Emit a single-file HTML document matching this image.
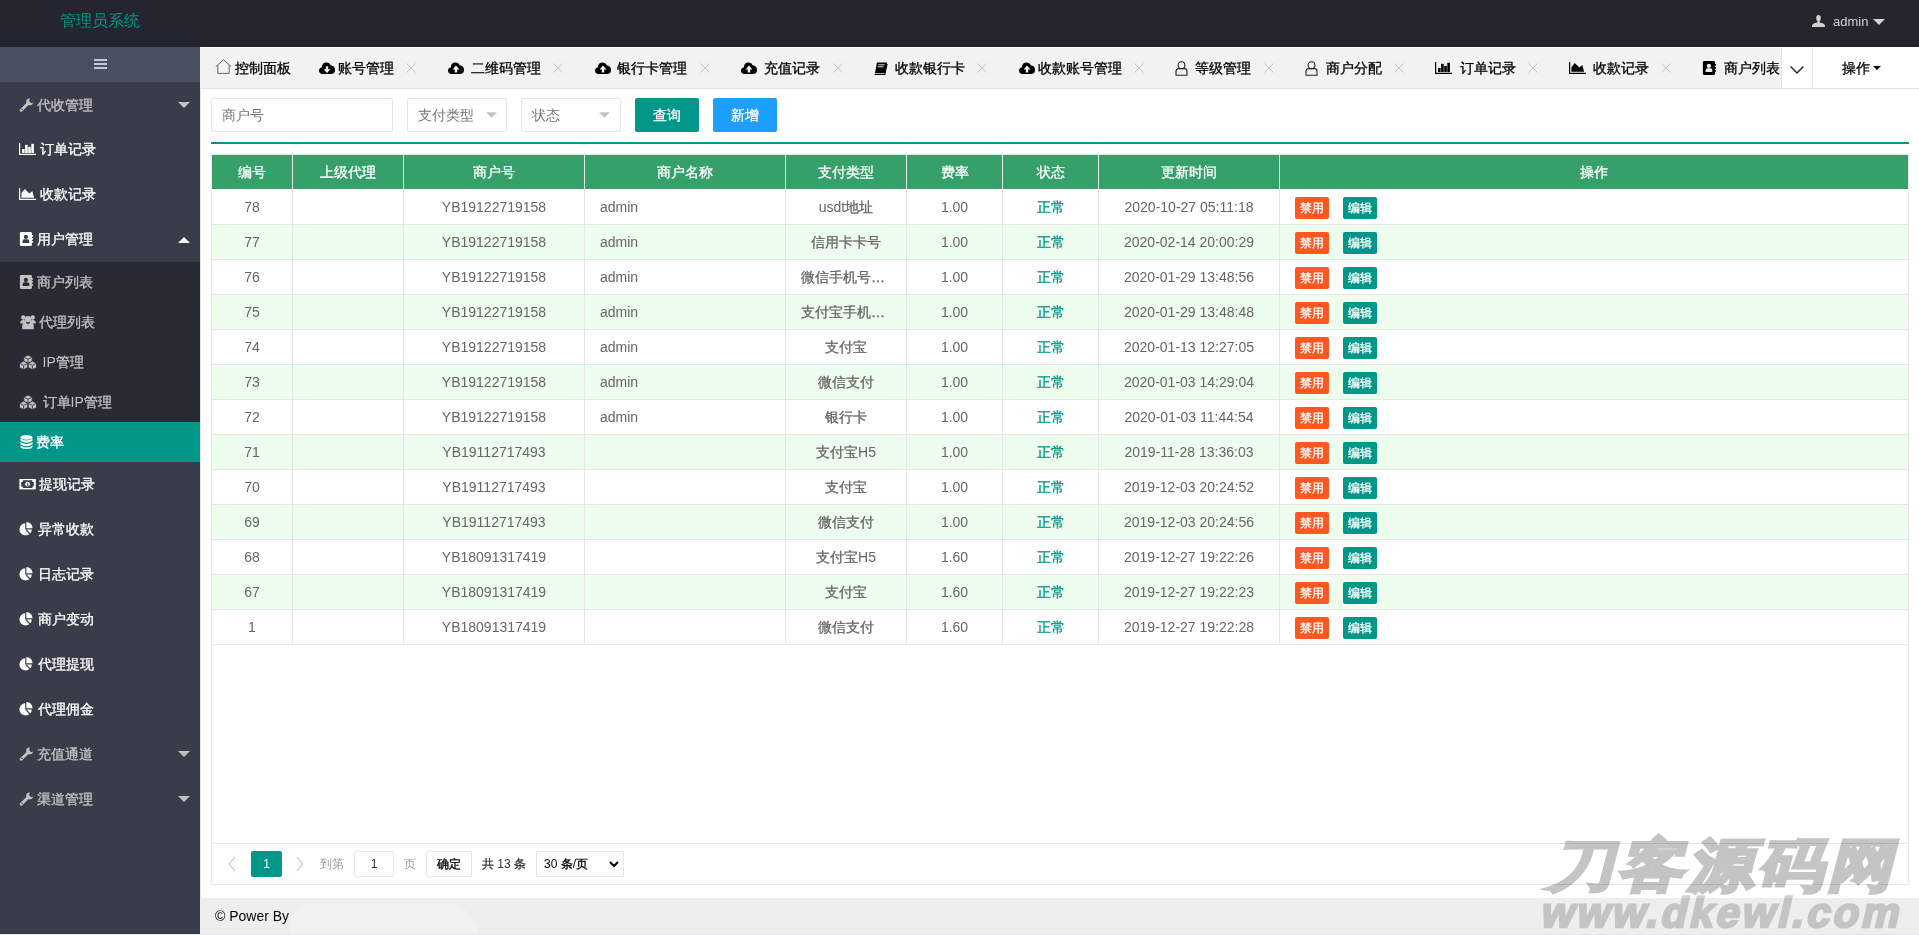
<!DOCTYPE html><html><head><meta charset="utf-8"><style>
*{margin:0;padding:0;box-sizing:border-box}
html,body{width:1919px;height:935px;overflow:hidden;background:#fff;font-family:"Liberation Sans",sans-serif;font-size:14px;color:#333}
.a{position:absolute}
svg{display:block}
.cj{-webkit-text-stroke-width:0.3px}
.ns .cj{-webkit-text-stroke-width:0}
.nv{position:absolute;left:0;width:200px;height:45px}
.nv .ic{position:absolute;left:19px}
.nv .tx{position:absolute;white-space:nowrap;line-height:20px;font-size:14px}
.tab{position:absolute;top:58px;line-height:20px;white-space:nowrap;color:#000}
.th{position:absolute;top:155px;height:34px;line-height:34px;text-align:center;color:#fff;font-size:14px}
.td{position:absolute;height:35px;line-height:37px;color:#666;white-space:nowrap;font-size:14px}
.btn{position:absolute;width:34px;height:22px;border-radius:2px;color:#fff;font-size:12px;line-height:22px;text-align:center}
</style></head><body>

<div class="a" style="left:0;top:0;width:1919px;height:47px;background:#23262E"></div>
<div class="a ns" style="left:0;top:11px;width:200px;text-align:center;line-height:20px;font-size:16px;color:#009688"><span class="cj">管理员系统</span></div>
<div class="a" style="left:1812px;top:15px"><svg width="13" height="12" viewBox="0 0 13 12"><path d="M4.2 3 Q4.2 0 6.5 0 Q8.8 0 8.8 3 Q8.8 5.6 7.6 6.6 V7.6 Q13 8.6 13 11 V12 H0 V11 Q0 8.6 5.4 7.6 V6.6 Q4.2 5.6 4.2 3 Z" fill="#d2d2d2"/></svg></div>
<div class="a" style="left:1833px;top:11.5px;line-height:20px;font-size:13px;color:#d2d2d2">admin</div>
<div class="a" style="left:1873px;top:19px"><svg width="12" height="6" viewBox="0 0 12 6"><path d="M0 0 H12 L6 6 Z" fill="#d2d2d2"/></svg></div>
<div class="a" style="left:0;top:47px;width:200px;height:888px;background:#393D49"></div>
<div class="a" style="left:0;top:47px;width:200px;height:35px;background:#4A4F61"></div>
<div class="a" style="left:93.5px;top:59px"><svg width="13" height="10" viewBox="0 0 13 10"><rect x="0" y="0" width="13" height="2" fill="#c6ccd4"/><rect x="0" y="4" width="13" height="2" fill="#c6ccd4"/><rect x="0" y="8" width="13" height="2" fill="#c6ccd4"/></svg></div>
<div class="a" style="left:0;top:262px;width:200px;height:200px;background:#282B33"></div>
<div class="a" style="left:0;top:422px;width:200px;height:40px;background:#009688"></div>
<div class="a" style="left:19px;top:97.5px"><svg width="15" height="14" viewBox="0 0 15 14"><path d="M2.2 12.2 L8.2 6.2" stroke="#c2c2c2" stroke-width="3" stroke-linecap="round"/><circle cx="10.6" cy="3.9" r="3.4" fill="#c2c2c2"/><path d="M11.3 -0.5 L15.5 3.7 L12.2 5.2 L10.0 2.9 Z" fill="#393D49"/><circle cx="3" cy="11.4" r="0.7" fill="#393D49"/></svg></div>
<div class="a" style="left:37px;top:94.5px;line-height:20px;color:#c2c2c2;white-space:nowrap"><span class="cj">代收管理</span></div>
<div class="a" style="left:178px;top:101.5px"><svg width="12" height="6" viewBox="0 0 12 6"><path d="M0 0 H12 L6 6 Z" fill="#c2c2c2"/></svg></div>
<div class="a" style="left:19px;top:143.0px"><svg width="17" height="12" viewBox="0 0 17 12"><path d="M0.6 0 V11.4 H17" stroke="#ffffff" stroke-width="1.2" fill="none"/><rect x="3.1" y="6" width="2.5" height="4" fill="#ffffff"/><rect x="6.1" y="1.8" width="2.6" height="8.2" fill="#ffffff"/><rect x="9.2" y="3.8" width="2.6" height="6.2" fill="#ffffff"/><rect x="12.3" y="0.8" width="2.6" height="9.2" fill="#ffffff"/></svg></div>
<div class="a" style="left:40px;top:139.0px;line-height:20px;color:#ffffff;white-space:nowrap"><span class="cj">订单记录</span></div>
<div class="a" style="left:19px;top:188.0px"><svg width="17" height="12" viewBox="0 0 17 12"><path d="M0.6 0 V11.4 H17" stroke="#ffffff" stroke-width="1.2" fill="none"/><path d="M2.4 9.8 V5.2 L5.8 0.9 L10.4 5.4 L13.3 3 L15.1 9.8 Z" fill="#ffffff"/></svg></div>
<div class="a" style="left:40px;top:184.0px;line-height:20px;color:#ffffff;white-space:nowrap"><span class="cj">收款记录</span></div>
<div class="a" style="left:19px;top:232.0px"><svg width="15" height="14" viewBox="0 0 15 14"><rect x="0.9" y="0" width="12" height="14" rx="1.2" fill="#ffffff"/><rect x="12" y="3.1" width="2.2" height="1.7" rx="0.8" fill="#ffffff"/><rect x="12" y="6.1" width="2.2" height="1.7" rx="0.8" fill="#ffffff"/><rect x="12" y="9.1" width="2.2" height="1.7" rx="0.8" fill="#ffffff"/><circle cx="6.9" cy="4.9" r="2.1" fill="#393D49"/><path d="M3.6 10.9 V9.4 Q3.6 7.3 5.4 7.3 H8.4 Q10.3 7.3 10.3 9.4 V10.9 Z" fill="#393D49"/></svg></div>
<div class="a" style="left:37px;top:229.0px;line-height:20px;color:#ffffff;white-space:nowrap"><span class="cj">用户管理</span></div>
<div class="a" style="left:178px;top:237.0px"><svg width="12" height="6" viewBox="0 0 12 6"><path d="M0 6 H12 L6 0 Z" fill="#ffffff"/></svg></div>
<div class="a" style="left:19px;top:275.0px"><svg width="15" height="14" viewBox="0 0 15 14"><rect x="0.9" y="0" width="12" height="14" rx="1.2" fill="#c2c2c2"/><rect x="12" y="3.1" width="2.2" height="1.7" rx="0.8" fill="#c2c2c2"/><rect x="12" y="6.1" width="2.2" height="1.7" rx="0.8" fill="#c2c2c2"/><rect x="12" y="9.1" width="2.2" height="1.7" rx="0.8" fill="#c2c2c2"/><circle cx="6.9" cy="4.9" r="2.1" fill="#282B33"/><path d="M3.6 10.9 V9.4 Q3.6 7.3 5.4 7.3 H8.4 Q10.3 7.3 10.3 9.4 V10.9 Z" fill="#282B33"/></svg></div>
<div class="a" style="left:37px;top:272.0px;line-height:20px;color:#c2c2c2;white-space:nowrap"><span class="cj">商户列表</span></div>
<div class="a" style="left:20px;top:314.5px"><svg width="16" height="15" viewBox="0 0 16 15"><circle cx="3.3" cy="2.5" r="2.2" fill="#c2c2c2"/><circle cx="12.7" cy="2.5" r="2.2" fill="#c2c2c2"/><path d="M0.1 8.6 Q0.1 5 3.3 5 Q5 5 6 6 V8.6 Z" fill="#c2c2c2"/><path d="M15.9 8.6 Q15.9 5 12.7 5 Q11 5 10 6 V8.6 Z" fill="#c2c2c2"/><circle cx="8" cy="4.2" r="3.1" fill="#c2c2c2"/><path d="M2.2 14.2 V11.4 Q2.2 7.8 5.2 7.8 L8 9 L10.8 7.8 Q13.8 7.8 13.8 11.4 V14.2 Z" fill="#c2c2c2"/></svg></div>
<div class="a" style="left:39px;top:312.0px;line-height:20px;color:#c2c2c2;white-space:nowrap"><span class="cj">代理列表</span></div>
<div class="a" style="left:19px;top:354.5px"><svg width="18" height="15" viewBox="0 0 18 15"><path d="M4.8 2.1 L9.0 0 L13.2 2.1 V6.5 L9.0 8.6 L4.8 6.5 Z" fill="#c2c2c2" stroke="#282B33" stroke-width="0.9"/><path d="M5.3999999999999995 2.4 L9.0 4.2 L12.6 2.4 M9.0 4.2 V8.2" fill="none" stroke="#282B33" stroke-width="0.8"/><path d="M0.4 8.2 L4.6000000000000005 6.1 L8.8 8.2 V12.6 L4.6000000000000005 14.7 L0.4 12.6 Z" fill="#c2c2c2" stroke="#282B33" stroke-width="0.9"/><path d="M1.0 8.5 L4.6000000000000005 10.3 L8.2 8.5 M4.6000000000000005 10.3 V14.299999999999999" fill="none" stroke="#282B33" stroke-width="0.8"/><path d="M9.2 8.2 L13.399999999999999 6.1 L17.6 8.2 V12.6 L13.399999999999999 14.7 L9.2 12.6 Z" fill="#c2c2c2" stroke="#282B33" stroke-width="0.9"/><path d="M9.799999999999999 8.5 L13.399999999999999 10.3 L17.0 8.5 M13.399999999999999 10.3 V14.299999999999999" fill="none" stroke="#282B33" stroke-width="0.8"/></svg></div>
<div class="a" style="left:42.5px;top:352.0px;line-height:20px;color:#c2c2c2;white-space:nowrap">IP<span class="cj">管理</span></div>
<div class="a" style="left:19px;top:394.5px"><svg width="18" height="15" viewBox="0 0 18 15"><path d="M4.8 2.1 L9.0 0 L13.2 2.1 V6.5 L9.0 8.6 L4.8 6.5 Z" fill="#c2c2c2" stroke="#282B33" stroke-width="0.9"/><path d="M5.3999999999999995 2.4 L9.0 4.2 L12.6 2.4 M9.0 4.2 V8.2" fill="none" stroke="#282B33" stroke-width="0.8"/><path d="M0.4 8.2 L4.6000000000000005 6.1 L8.8 8.2 V12.6 L4.6000000000000005 14.7 L0.4 12.6 Z" fill="#c2c2c2" stroke="#282B33" stroke-width="0.9"/><path d="M1.0 8.5 L4.6000000000000005 10.3 L8.2 8.5 M4.6000000000000005 10.3 V14.299999999999999" fill="none" stroke="#282B33" stroke-width="0.8"/><path d="M9.2 8.2 L13.399999999999999 6.1 L17.6 8.2 V12.6 L13.399999999999999 14.7 L9.2 12.6 Z" fill="#c2c2c2" stroke="#282B33" stroke-width="0.9"/><path d="M9.799999999999999 8.5 L13.399999999999999 10.3 L17.0 8.5 M13.399999999999999 10.3 V14.299999999999999" fill="none" stroke="#282B33" stroke-width="0.8"/></svg></div>
<div class="a" style="left:42.5px;top:392.0px;line-height:20px;color:#c2c2c2;white-space:nowrap"><span class="cj">订单</span>IP<span class="cj">管理</span></div>
<div class="a" style="left:20px;top:435.0px"><svg width="13" height="14" viewBox="0 0 13 14"><ellipse cx="6.5" cy="2.4" rx="6" ry="2.4" fill="#ffffff"/><path d="M0.5 3.6 Q6.5 7.5 12.5 3.6 V5.8 Q6.5 9.6 0.5 5.8 Z" fill="#ffffff"/><path d="M0.5 7.1 Q6.5 11 12.5 7.1 V9.3 Q6.5 13.1 0.5 9.3 Z" fill="#ffffff"/><path d="M0.5 10.6 Q6.5 14.5 12.5 10.6 V11.5 Q12.5 14 6.5 14 Q0.5 14 0.5 11.5 Z" fill="#ffffff"/></svg></div>
<div class="a" style="left:36px;top:432.0px;line-height:20px;color:#ffffff;white-space:nowrap"><span class="cj">费率</span></div>
<div class="a" style="left:19px;top:478.5px"><svg width="17" height="11" viewBox="0 0 17 11"><rect x="0.4" y="0" width="16.4" height="10.4" fill="#ffffff"/><path d="M4 1.3 H13.2 L13.6 2.9 H14.8 V7.5 H13.6 L13.2 9.1 H4 L3.6 7.5 H2.2 V2.9 H3.6 Z" fill="#393D49"/><circle cx="8.6" cy="5.2" r="2.4" fill="#ffffff"/><path d="M8.8 3.8 V6.6 M8 6.6 H9.6" stroke="#393D49" stroke-width="0.9"/></svg></div>
<div class="a" style="left:39px;top:474.0px;line-height:20px;color:#ffffff;white-space:nowrap"><span class="cj">提现记录</span></div>
<div class="a" style="left:19px;top:522.0px"><svg width="14" height="14" viewBox="0 0 14 14"><path d="M6.2 1.2 A6.2 6.2 0 1 0 12.8 7.6 H6.2 Z" fill="#ffffff"/><path d="M7.4 0 A6.4 6.4 0 0 1 13.6 6.2 H7.4 Z" fill="#ffffff"/><path d="M7 7.6 L11 12" stroke="#393D49" stroke-width="1.2"/></svg></div>
<div class="a" style="left:38px;top:519.0px;line-height:20px;color:#ffffff;white-space:nowrap"><span class="cj">异常收款</span></div>
<div class="a" style="left:19px;top:567.0px"><svg width="14" height="14" viewBox="0 0 14 14"><path d="M6.2 1.2 A6.2 6.2 0 1 0 12.8 7.6 H6.2 Z" fill="#ffffff"/><path d="M7.4 0 A6.4 6.4 0 0 1 13.6 6.2 H7.4 Z" fill="#ffffff"/><path d="M7 7.6 L11 12" stroke="#393D49" stroke-width="1.2"/></svg></div>
<div class="a" style="left:38px;top:564.0px;line-height:20px;color:#ffffff;white-space:nowrap"><span class="cj">日志记录</span></div>
<div class="a" style="left:19px;top:612.0px"><svg width="14" height="14" viewBox="0 0 14 14"><path d="M6.2 1.2 A6.2 6.2 0 1 0 12.8 7.6 H6.2 Z" fill="#ffffff"/><path d="M7.4 0 A6.4 6.4 0 0 1 13.6 6.2 H7.4 Z" fill="#ffffff"/><path d="M7 7.6 L11 12" stroke="#393D49" stroke-width="1.2"/></svg></div>
<div class="a" style="left:38px;top:609.0px;line-height:20px;color:#ffffff;white-space:nowrap"><span class="cj">商户变动</span></div>
<div class="a" style="left:19px;top:657.0px"><svg width="14" height="14" viewBox="0 0 14 14"><path d="M6.2 1.2 A6.2 6.2 0 1 0 12.8 7.6 H6.2 Z" fill="#ffffff"/><path d="M7.4 0 A6.4 6.4 0 0 1 13.6 6.2 H7.4 Z" fill="#ffffff"/><path d="M7 7.6 L11 12" stroke="#393D49" stroke-width="1.2"/></svg></div>
<div class="a" style="left:38px;top:654.0px;line-height:20px;color:#ffffff;white-space:nowrap"><span class="cj">代理提现</span></div>
<div class="a" style="left:19px;top:702.0px"><svg width="14" height="14" viewBox="0 0 14 14"><path d="M6.2 1.2 A6.2 6.2 0 1 0 12.8 7.6 H6.2 Z" fill="#ffffff"/><path d="M7.4 0 A6.4 6.4 0 0 1 13.6 6.2 H7.4 Z" fill="#ffffff"/><path d="M7 7.6 L11 12" stroke="#393D49" stroke-width="1.2"/></svg></div>
<div class="a" style="left:38px;top:699.0px;line-height:20px;color:#ffffff;white-space:nowrap"><span class="cj">代理佣金</span></div>
<div class="a" style="left:19px;top:747.0px"><svg width="15" height="14" viewBox="0 0 15 14"><path d="M2.2 12.2 L8.2 6.2" stroke="#c2c2c2" stroke-width="3" stroke-linecap="round"/><circle cx="10.6" cy="3.9" r="3.4" fill="#c2c2c2"/><path d="M11.3 -0.5 L15.5 3.7 L12.2 5.2 L10.0 2.9 Z" fill="#393D49"/><circle cx="3" cy="11.4" r="0.7" fill="#393D49"/></svg></div>
<div class="a" style="left:37px;top:744.0px;line-height:20px;color:#c2c2c2;white-space:nowrap"><span class="cj">充值通道</span></div>
<div class="a" style="left:178px;top:751.0px"><svg width="12" height="6" viewBox="0 0 12 6"><path d="M0 0 H12 L6 6 Z" fill="#c2c2c2"/></svg></div>
<div class="a" style="left:19px;top:792.0px"><svg width="15" height="14" viewBox="0 0 15 14"><path d="M2.2 12.2 L8.2 6.2" stroke="#c2c2c2" stroke-width="3" stroke-linecap="round"/><circle cx="10.6" cy="3.9" r="3.4" fill="#c2c2c2"/><path d="M11.3 -0.5 L15.5 3.7 L12.2 5.2 L10.0 2.9 Z" fill="#393D49"/><circle cx="3" cy="11.4" r="0.7" fill="#393D49"/></svg></div>
<div class="a" style="left:37px;top:789.0px;line-height:20px;color:#c2c2c2;white-space:nowrap"><span class="cj">渠道管理</span></div>
<div class="a" style="left:178px;top:796.0px"><svg width="12" height="6" viewBox="0 0 12 6"><path d="M0 0 H12 L6 6 Z" fill="#c2c2c2"/></svg></div>
<div class="a" style="left:200px;top:47px;width:1px;height:851px;background:#e6e6e6"></div>
<div class="a" style="left:200px;top:47px;width:1719px;height:42px;background:#f2f2f2;border-top:1px solid #fff;border-bottom:1px solid #e2e2e2"></div>
<div class="a" style="left:215px;top:59px"><svg width="17" height="15" viewBox="0 0 17 15"><path d="M0.8 7.6 L8.5 0.8 L16.2 7.6" stroke="#555" stroke-width="0.9" fill="none"/><path d="M2.8 6.2 V14.4 H14.2 V6.2" stroke="#555" stroke-width="0.9" fill="none"/></svg></div>
<div class="tab" style="left:235px"><span class="cj">控制面板</span></div>
<div class="a" style="left:319px;top:62px"><svg width="16" height="12" viewBox="0 0 16 12"><path d="M3.6 12 Q0 12 0 8.6 Q0 5.8 2.8 5.4 Q3 0.4 7.6 0.4 Q10.6 0.4 11.6 3.2 Q16 3.6 16 8 Q16 12 12 12 Z" fill="#000"/><path d="M8 11 L4.6 7.2 H6.8 V4.2 H9.2 V7.2 H11.4 Z" fill="#f2f2f2"/></svg></div>
<div class="tab" style="left:337.5px"><span class="cj">账号管理</span></div>
<div class="a" style="left:406px;top:63px"><svg width="10" height="10" viewBox="0 0 10 10"><path d="M0.5 0.5 L9.5 9.5 M9.5 0.5 L0.5 9.5" stroke="#c2c2c2" stroke-width="1"/></svg></div>
<div class="a" style="left:448px;top:62px"><svg width="16" height="12" viewBox="0 0 16 12"><path d="M3.6 12 Q0 12 0 8.6 Q0 5.8 2.8 5.4 Q3 0.4 7.6 0.4 Q10.6 0.4 11.6 3.2 Q16 3.6 16 8 Q16 12 12 12 Z" fill="#000"/><path d="M8 3.6 L4.6 7.4 H6.8 V10.4 H9.2 V7.4 H11.4 Z" fill="#f2f2f2"/></svg></div>
<div class="tab" style="left:470.5px"><span class="cj">二维码管理</span></div>
<div class="a" style="left:553px;top:63px"><svg width="10" height="10" viewBox="0 0 10 10"><path d="M0.5 0.5 L9.5 9.5 M9.5 0.5 L0.5 9.5" stroke="#c2c2c2" stroke-width="1"/></svg></div>
<div class="a" style="left:594.5px;top:62px"><svg width="16" height="12" viewBox="0 0 16 12"><path d="M3.6 12 Q0 12 0 8.6 Q0 5.8 2.8 5.4 Q3 0.4 7.6 0.4 Q10.6 0.4 11.6 3.2 Q16 3.6 16 8 Q16 12 12 12 Z" fill="#000"/><path d="M8 3.6 L4.6 7.4 H6.8 V10.4 H9.2 V7.4 H11.4 Z" fill="#f2f2f2"/></svg></div>
<div class="tab" style="left:616.5px"><span class="cj">银行卡管理</span></div>
<div class="a" style="left:699.5px;top:63px"><svg width="10" height="10" viewBox="0 0 10 10"><path d="M0.5 0.5 L9.5 9.5 M9.5 0.5 L0.5 9.5" stroke="#c2c2c2" stroke-width="1"/></svg></div>
<div class="a" style="left:741px;top:62px"><svg width="16" height="12" viewBox="0 0 16 12"><path d="M3.6 12 Q0 12 0 8.6 Q0 5.8 2.8 5.4 Q3 0.4 7.6 0.4 Q10.6 0.4 11.6 3.2 Q16 3.6 16 8 Q16 12 12 12 Z" fill="#000"/><path d="M8 3.6 L4.6 7.4 H6.8 V10.4 H9.2 V7.4 H11.4 Z" fill="#f2f2f2"/></svg></div>
<div class="tab" style="left:764px"><span class="cj">充值记录</span></div>
<div class="a" style="left:833px;top:63px"><svg width="10" height="10" viewBox="0 0 10 10"><path d="M0.5 0.5 L9.5 9.5 M9.5 0.5 L0.5 9.5" stroke="#c2c2c2" stroke-width="1"/></svg></div>
<div class="a" style="left:874px;top:62px"><svg width="14" height="13" viewBox="0 0 14 13"><path d="M3 0.6 H13.2 L10.8 11 H1 Z" fill="#000"/><path d="M0.6 12.4 H10.8 L13.2 2" stroke="#000" stroke-width="1.1" fill="none"/><path d="M4.2 2.8 H10.6 M3.6 4.8 H9.6" stroke="#f2f2f2" stroke-width="0.9"/></svg></div>
<div class="tab" style="left:895px"><span class="cj">收款银行卡</span></div>
<div class="a" style="left:977px;top:63px"><svg width="10" height="10" viewBox="0 0 10 10"><path d="M0.5 0.5 L9.5 9.5 M9.5 0.5 L0.5 9.5" stroke="#c2c2c2" stroke-width="1"/></svg></div>
<div class="a" style="left:1019px;top:62px"><svg width="16" height="12" viewBox="0 0 16 12"><path d="M3.6 12 Q0 12 0 8.6 Q0 5.8 2.8 5.4 Q3 0.4 7.6 0.4 Q10.6 0.4 11.6 3.2 Q16 3.6 16 8 Q16 12 12 12 Z" fill="#000"/><path d="M8 3.6 L4.6 7.4 H6.8 V10.4 H9.2 V7.4 H11.4 Z" fill="#f2f2f2"/></svg></div>
<div class="tab" style="left:1038px"><span class="cj">收款账号管理</span></div>
<div class="a" style="left:1134px;top:63px"><svg width="10" height="10" viewBox="0 0 10 10"><path d="M0.5 0.5 L9.5 9.5 M9.5 0.5 L0.5 9.5" stroke="#c2c2c2" stroke-width="1"/></svg></div>
<div class="a" style="left:1175px;top:60.5px"><svg width="13" height="15" viewBox="0 0 13 15"><circle cx="6.5" cy="4.2" r="3.4" stroke="#222" stroke-width="1.1" fill="none"/><path d="M1 14.2 V10.4 Q1 7.6 3.6 7.6 H9.4 Q12 7.6 12 10.4 V14.2 Z" stroke="#222" stroke-width="1.1" fill="none"/></svg></div>
<div class="tab" style="left:1195px"><span class="cj">等级管理</span></div>
<div class="a" style="left:1264px;top:63px"><svg width="10" height="10" viewBox="0 0 10 10"><path d="M0.5 0.5 L9.5 9.5 M9.5 0.5 L0.5 9.5" stroke="#c2c2c2" stroke-width="1"/></svg></div>
<div class="a" style="left:1305px;top:60.5px"><svg width="13" height="15" viewBox="0 0 13 15"><circle cx="6.5" cy="4.2" r="3.4" stroke="#222" stroke-width="1.1" fill="none"/><path d="M1 14.2 V10.4 Q1 7.6 3.6 7.6 H9.4 Q12 7.6 12 10.4 V14.2 Z" stroke="#222" stroke-width="1.1" fill="none"/></svg></div>
<div class="tab" style="left:1325.5px"><span class="cj">商户分配</span></div>
<div class="a" style="left:1394px;top:63px"><svg width="10" height="10" viewBox="0 0 10 10"><path d="M0.5 0.5 L9.5 9.5 M9.5 0.5 L0.5 9.5" stroke="#c2c2c2" stroke-width="1"/></svg></div>
<div class="a" style="left:1435px;top:62px"><svg width="17" height="12" viewBox="0 0 17 12"><path d="M0.6 0 V11.4 H17" stroke="#000" stroke-width="1.2" fill="none"/><rect x="3.1" y="6" width="2.5" height="4" fill="#000"/><rect x="6.1" y="1.8" width="2.6" height="8.2" fill="#000"/><rect x="9.2" y="3.8" width="2.6" height="6.2" fill="#000"/><rect x="12.3" y="0.8" width="2.6" height="9.2" fill="#000"/></svg></div>
<div class="tab" style="left:1460px"><span class="cj">订单记录</span></div>
<div class="a" style="left:1528px;top:63px"><svg width="10" height="10" viewBox="0 0 10 10"><path d="M0.5 0.5 L9.5 9.5 M9.5 0.5 L0.5 9.5" stroke="#c2c2c2" stroke-width="1"/></svg></div>
<div class="a" style="left:1569px;top:62px"><svg width="17" height="12" viewBox="0 0 17 12"><path d="M0.6 0 V11.4 H17" stroke="#000" stroke-width="1.2" fill="none"/><path d="M2.4 9.8 V5.2 L5.8 0.9 L10.4 5.4 L13.3 3 L15.1 9.8 Z" fill="#000"/></svg></div>
<div class="tab" style="left:1593px"><span class="cj">收款记录</span></div>
<div class="a" style="left:1661px;top:63px"><svg width="10" height="10" viewBox="0 0 10 10"><path d="M0.5 0.5 L9.5 9.5 M9.5 0.5 L0.5 9.5" stroke="#c2c2c2" stroke-width="1"/></svg></div>
<div class="a" style="left:1702px;top:61px"><svg width="15" height="14" viewBox="0 0 15 14"><rect x="0.9" y="0" width="12" height="14" rx="1.2" fill="#000"/><rect x="12" y="3.1" width="2.2" height="1.7" rx="0.8" fill="#000"/><rect x="12" y="6.1" width="2.2" height="1.7" rx="0.8" fill="#000"/><rect x="12" y="9.1" width="2.2" height="1.7" rx="0.8" fill="#000"/><circle cx="6.9" cy="4.9" r="2.1" fill="#f2f2f2"/><path d="M3.6 10.9 V9.4 Q3.6 7.3 5.4 7.3 H8.4 Q10.3 7.3 10.3 9.4 V10.9 Z" fill="#f2f2f2"/></svg></div>
<div class="tab" style="left:1724px"><span class="cj">商户列表</span></div>
<div class="a" style="left:1781px;top:48px;width:32px;height:40px;background:#fff;border-left:1px solid #e2e2e2;border-right:1px solid #e2e2e2"></div>
<div class="a" style="left:1813px;top:48px;width:106px;height:40px;background:#fff"></div>
<div class="a" style="left:1790px;top:66px"><svg width="14" height="8" viewBox="0 0 14 8"><path d="M0.6 0.6 L7 7 L13.4 0.6" stroke="#222" stroke-width="1.4" fill="none"/></svg></div>
<div class="a" style="left:1841.5px;top:58px;line-height:20px;color:#000"><span class="cj">操作</span></div>
<div class="a" style="left:1873px;top:66px"><svg width="8" height="4" viewBox="0 0 12 6"><path d="M0 0 H12 L6 6 Z" fill="#000"/></svg></div>
<div class="a" style="left:211px;top:98px;width:182px;height:34px;border:1px solid #e6e6e6;border-radius:2px"></div>
<div class="a ns" style="left:222px;top:105px;line-height:20px;color:#757575"><span class="cj">商户号</span></div>
<div class="a" style="left:407px;top:98px;width:100px;height:34px;border:1px solid #e6e6e6;border-radius:2px"></div>
<div class="a ns" style="left:418px;top:105px;line-height:20px;color:#757575"><span class="cj">支付类型</span></div>
<div class="a" style="left:485.5px;top:112px"><svg width="11" height="6" viewBox="0 0 12 6"><path d="M0 0 H12 L6 6 Z" fill="#c2c2c2"/></svg></div>
<div class="a" style="left:521px;top:98px;width:100px;height:34px;border:1px solid #e6e6e6;border-radius:2px"></div>
<div class="a ns" style="left:532px;top:105px;line-height:20px;color:#757575"><span class="cj">状态</span></div>
<div class="a" style="left:599px;top:112px"><svg width="11" height="6" viewBox="0 0 12 6"><path d="M0 0 H12 L6 6 Z" fill="#c2c2c2"/></svg></div>
<div class="a" style="left:635px;top:98px;width:64px;height:34px;background:#009688;border-radius:2px;color:#fff;text-align:center;line-height:34px"><span class="cj">查询</span></div>
<div class="a" style="left:713px;top:98px;width:64px;height:34px;background:#1E9FFF;border-radius:2px;color:#fff;text-align:center;line-height:34px"><span class="cj">新增</span></div>
<div class="a" style="left:211px;top:142px;width:1698px;height:2px;background:#009688"></div>
<div class="a" style="left:211px;top:154px;width:1698px;height:731px;border:1px solid #e6e6e6"></div>
<div class="a" style="left:212px;top:155px;width:1696px;height:34px;background:#35A06A"></div>
<div class="a" style="left:212px;top:224px;width:1696px;height:1px;background:#e6e6e6"></div>
<div class="a" style="left:212px;top:225px;width:1696px;height:34px;background:#EEFEEE"></div>
<div class="a" style="left:212px;top:259px;width:1696px;height:1px;background:#e6e6e6"></div>
<div class="a" style="left:212px;top:294px;width:1696px;height:1px;background:#e6e6e6"></div>
<div class="a" style="left:212px;top:295px;width:1696px;height:34px;background:#EEFEEE"></div>
<div class="a" style="left:212px;top:329px;width:1696px;height:1px;background:#e6e6e6"></div>
<div class="a" style="left:212px;top:364px;width:1696px;height:1px;background:#e6e6e6"></div>
<div class="a" style="left:212px;top:365px;width:1696px;height:34px;background:#EEFEEE"></div>
<div class="a" style="left:212px;top:399px;width:1696px;height:1px;background:#e6e6e6"></div>
<div class="a" style="left:212px;top:434px;width:1696px;height:1px;background:#e6e6e6"></div>
<div class="a" style="left:212px;top:435px;width:1696px;height:34px;background:#EEFEEE"></div>
<div class="a" style="left:212px;top:469px;width:1696px;height:1px;background:#e6e6e6"></div>
<div class="a" style="left:212px;top:504px;width:1696px;height:1px;background:#e6e6e6"></div>
<div class="a" style="left:212px;top:505px;width:1696px;height:34px;background:#EEFEEE"></div>
<div class="a" style="left:212px;top:539px;width:1696px;height:1px;background:#e6e6e6"></div>
<div class="a" style="left:212px;top:574px;width:1696px;height:1px;background:#e6e6e6"></div>
<div class="a" style="left:212px;top:575px;width:1696px;height:34px;background:#EEFEEE"></div>
<div class="a" style="left:212px;top:609px;width:1696px;height:1px;background:#e6e6e6"></div>
<div class="a" style="left:212px;top:644px;width:1696px;height:1px;background:#e6e6e6"></div>
<div class="a" style="left:292px;top:155px;width:1px;height:489px;background:#e6e6e6"></div>
<div class="a" style="left:403px;top:155px;width:1px;height:489px;background:#e6e6e6"></div>
<div class="a" style="left:584px;top:155px;width:1px;height:489px;background:#e6e6e6"></div>
<div class="a" style="left:785px;top:155px;width:1px;height:489px;background:#e6e6e6"></div>
<div class="a" style="left:906px;top:155px;width:1px;height:489px;background:#e6e6e6"></div>
<div class="a" style="left:1002px;top:155px;width:1px;height:489px;background:#e6e6e6"></div>
<div class="a" style="left:1098px;top:155px;width:1px;height:489px;background:#e6e6e6"></div>
<div class="a" style="left:1279px;top:155px;width:1px;height:489px;background:#e6e6e6"></div>
<div class="th" style="left:212px;width:80px"><span class="cj">编号</span></div>
<div class="th" style="left:293px;width:110px"><span class="cj">上级代理</span></div>
<div class="th" style="left:404px;width:180px"><span class="cj">商户号</span></div>
<div class="th" style="left:585px;width:200px"><span class="cj">商户名称</span></div>
<div class="th" style="left:786px;width:120px"><span class="cj">支付类型</span></div>
<div class="th" style="left:907px;width:95px"><span class="cj">费率</span></div>
<div class="th" style="left:1003px;width:95px"><span class="cj">状态</span></div>
<div class="th" style="left:1099px;width:180px"><span class="cj">更新时间</span></div>
<div class="th" style="left:1280px;width:628px"><span class="cj">操作</span></div>
<div class="td" style="left:212px;top:189px;width:80px;text-align:center">78</div>
<div class="td" style="left:404px;top:189px;width:180px;text-align:center">YB19122719158</div>
<div class="td" style="left:786px;top:189px;width:120px;text-align:center">usdt<span class="cj">地址</span></div>
<div class="td" style="left:907px;top:189px;width:95px;text-align:center">1.00</div>
<div class="td" style="left:1099px;top:189px;width:180px;text-align:center">2020-10-27 05:11:18</div>
<div class="td" style="left:600px;top:189px">admin</div>
<div class="td" style="left:1003px;top:189px;width:95px;text-align:center;color:#009688"><span class="cj">正常</span></div>
<div class="btn" style="left:1295px;top:197px;background:#FF5722"><span class="cj">禁用</span></div>
<div class="btn" style="left:1343px;top:197px;background:#009688"><span class="cj">编辑</span></div>
<div class="td" style="left:212px;top:224px;width:80px;text-align:center">77</div>
<div class="td" style="left:404px;top:224px;width:180px;text-align:center">YB19122719158</div>
<div class="td" style="left:786px;top:224px;width:120px;text-align:center"><span class="cj">信用卡卡号</span></div>
<div class="td" style="left:907px;top:224px;width:95px;text-align:center">1.00</div>
<div class="td" style="left:1099px;top:224px;width:180px;text-align:center">2020-02-14 20:00:29</div>
<div class="td" style="left:600px;top:224px">admin</div>
<div class="td" style="left:1003px;top:224px;width:95px;text-align:center;color:#009688"><span class="cj">正常</span></div>
<div class="btn" style="left:1295px;top:232px;background:#FF5722"><span class="cj">禁用</span></div>
<div class="btn" style="left:1343px;top:232px;background:#009688"><span class="cj">编辑</span></div>
<div class="td" style="left:212px;top:259px;width:80px;text-align:center">76</div>
<div class="td" style="left:404px;top:259px;width:180px;text-align:center">YB19122719158</div>
<div class="td" style="left:801px;top:259px"><span class="cj">微信手机号…</span></div>
<div class="td" style="left:907px;top:259px;width:95px;text-align:center">1.00</div>
<div class="td" style="left:1099px;top:259px;width:180px;text-align:center">2020-01-29 13:48:56</div>
<div class="td" style="left:600px;top:259px">admin</div>
<div class="td" style="left:1003px;top:259px;width:95px;text-align:center;color:#009688"><span class="cj">正常</span></div>
<div class="btn" style="left:1295px;top:267px;background:#FF5722"><span class="cj">禁用</span></div>
<div class="btn" style="left:1343px;top:267px;background:#009688"><span class="cj">编辑</span></div>
<div class="td" style="left:212px;top:294px;width:80px;text-align:center">75</div>
<div class="td" style="left:404px;top:294px;width:180px;text-align:center">YB19122719158</div>
<div class="td" style="left:801px;top:294px"><span class="cj">支付宝手机…</span></div>
<div class="td" style="left:907px;top:294px;width:95px;text-align:center">1.00</div>
<div class="td" style="left:1099px;top:294px;width:180px;text-align:center">2020-01-29 13:48:48</div>
<div class="td" style="left:600px;top:294px">admin</div>
<div class="td" style="left:1003px;top:294px;width:95px;text-align:center;color:#009688"><span class="cj">正常</span></div>
<div class="btn" style="left:1295px;top:302px;background:#FF5722"><span class="cj">禁用</span></div>
<div class="btn" style="left:1343px;top:302px;background:#009688"><span class="cj">编辑</span></div>
<div class="td" style="left:212px;top:329px;width:80px;text-align:center">74</div>
<div class="td" style="left:404px;top:329px;width:180px;text-align:center">YB19122719158</div>
<div class="td" style="left:786px;top:329px;width:120px;text-align:center"><span class="cj">支付宝</span></div>
<div class="td" style="left:907px;top:329px;width:95px;text-align:center">1.00</div>
<div class="td" style="left:1099px;top:329px;width:180px;text-align:center">2020-01-13 12:27:05</div>
<div class="td" style="left:600px;top:329px">admin</div>
<div class="td" style="left:1003px;top:329px;width:95px;text-align:center;color:#009688"><span class="cj">正常</span></div>
<div class="btn" style="left:1295px;top:337px;background:#FF5722"><span class="cj">禁用</span></div>
<div class="btn" style="left:1343px;top:337px;background:#009688"><span class="cj">编辑</span></div>
<div class="td" style="left:212px;top:364px;width:80px;text-align:center">73</div>
<div class="td" style="left:404px;top:364px;width:180px;text-align:center">YB19122719158</div>
<div class="td" style="left:786px;top:364px;width:120px;text-align:center"><span class="cj">微信支付</span></div>
<div class="td" style="left:907px;top:364px;width:95px;text-align:center">1.00</div>
<div class="td" style="left:1099px;top:364px;width:180px;text-align:center">2020-01-03 14:29:04</div>
<div class="td" style="left:600px;top:364px">admin</div>
<div class="td" style="left:1003px;top:364px;width:95px;text-align:center;color:#009688"><span class="cj">正常</span></div>
<div class="btn" style="left:1295px;top:372px;background:#FF5722"><span class="cj">禁用</span></div>
<div class="btn" style="left:1343px;top:372px;background:#009688"><span class="cj">编辑</span></div>
<div class="td" style="left:212px;top:399px;width:80px;text-align:center">72</div>
<div class="td" style="left:404px;top:399px;width:180px;text-align:center">YB19122719158</div>
<div class="td" style="left:786px;top:399px;width:120px;text-align:center"><span class="cj">银行卡</span></div>
<div class="td" style="left:907px;top:399px;width:95px;text-align:center">1.00</div>
<div class="td" style="left:1099px;top:399px;width:180px;text-align:center">2020-01-03 11:44:54</div>
<div class="td" style="left:600px;top:399px">admin</div>
<div class="td" style="left:1003px;top:399px;width:95px;text-align:center;color:#009688"><span class="cj">正常</span></div>
<div class="btn" style="left:1295px;top:407px;background:#FF5722"><span class="cj">禁用</span></div>
<div class="btn" style="left:1343px;top:407px;background:#009688"><span class="cj">编辑</span></div>
<div class="td" style="left:212px;top:434px;width:80px;text-align:center">71</div>
<div class="td" style="left:404px;top:434px;width:180px;text-align:center">YB19112717493</div>
<div class="td" style="left:786px;top:434px;width:120px;text-align:center"><span class="cj">支付宝</span>H5</div>
<div class="td" style="left:907px;top:434px;width:95px;text-align:center">1.00</div>
<div class="td" style="left:1099px;top:434px;width:180px;text-align:center">2019-11-28 13:36:03</div>
<div class="td" style="left:1003px;top:434px;width:95px;text-align:center;color:#009688"><span class="cj">正常</span></div>
<div class="btn" style="left:1295px;top:442px;background:#FF5722"><span class="cj">禁用</span></div>
<div class="btn" style="left:1343px;top:442px;background:#009688"><span class="cj">编辑</span></div>
<div class="td" style="left:212px;top:469px;width:80px;text-align:center">70</div>
<div class="td" style="left:404px;top:469px;width:180px;text-align:center">YB19112717493</div>
<div class="td" style="left:786px;top:469px;width:120px;text-align:center"><span class="cj">支付宝</span></div>
<div class="td" style="left:907px;top:469px;width:95px;text-align:center">1.00</div>
<div class="td" style="left:1099px;top:469px;width:180px;text-align:center">2019-12-03 20:24:52</div>
<div class="td" style="left:1003px;top:469px;width:95px;text-align:center;color:#009688"><span class="cj">正常</span></div>
<div class="btn" style="left:1295px;top:477px;background:#FF5722"><span class="cj">禁用</span></div>
<div class="btn" style="left:1343px;top:477px;background:#009688"><span class="cj">编辑</span></div>
<div class="td" style="left:212px;top:504px;width:80px;text-align:center">69</div>
<div class="td" style="left:404px;top:504px;width:180px;text-align:center">YB19112717493</div>
<div class="td" style="left:786px;top:504px;width:120px;text-align:center"><span class="cj">微信支付</span></div>
<div class="td" style="left:907px;top:504px;width:95px;text-align:center">1.00</div>
<div class="td" style="left:1099px;top:504px;width:180px;text-align:center">2019-12-03 20:24:56</div>
<div class="td" style="left:1003px;top:504px;width:95px;text-align:center;color:#009688"><span class="cj">正常</span></div>
<div class="btn" style="left:1295px;top:512px;background:#FF5722"><span class="cj">禁用</span></div>
<div class="btn" style="left:1343px;top:512px;background:#009688"><span class="cj">编辑</span></div>
<div class="td" style="left:212px;top:539px;width:80px;text-align:center">68</div>
<div class="td" style="left:404px;top:539px;width:180px;text-align:center">YB18091317419</div>
<div class="td" style="left:786px;top:539px;width:120px;text-align:center"><span class="cj">支付宝</span>H5</div>
<div class="td" style="left:907px;top:539px;width:95px;text-align:center">1.60</div>
<div class="td" style="left:1099px;top:539px;width:180px;text-align:center">2019-12-27 19:22:26</div>
<div class="td" style="left:1003px;top:539px;width:95px;text-align:center;color:#009688"><span class="cj">正常</span></div>
<div class="btn" style="left:1295px;top:547px;background:#FF5722"><span class="cj">禁用</span></div>
<div class="btn" style="left:1343px;top:547px;background:#009688"><span class="cj">编辑</span></div>
<div class="td" style="left:212px;top:574px;width:80px;text-align:center">67</div>
<div class="td" style="left:404px;top:574px;width:180px;text-align:center">YB18091317419</div>
<div class="td" style="left:786px;top:574px;width:120px;text-align:center"><span class="cj">支付宝</span></div>
<div class="td" style="left:907px;top:574px;width:95px;text-align:center">1.60</div>
<div class="td" style="left:1099px;top:574px;width:180px;text-align:center">2019-12-27 19:22:23</div>
<div class="td" style="left:1003px;top:574px;width:95px;text-align:center;color:#009688"><span class="cj">正常</span></div>
<div class="btn" style="left:1295px;top:582px;background:#FF5722"><span class="cj">禁用</span></div>
<div class="btn" style="left:1343px;top:582px;background:#009688"><span class="cj">编辑</span></div>
<div class="td" style="left:212px;top:609px;width:80px;text-align:center">1</div>
<div class="td" style="left:404px;top:609px;width:180px;text-align:center">YB18091317419</div>
<div class="td" style="left:786px;top:609px;width:120px;text-align:center"><span class="cj">微信支付</span></div>
<div class="td" style="left:907px;top:609px;width:95px;text-align:center">1.60</div>
<div class="td" style="left:1099px;top:609px;width:180px;text-align:center">2019-12-27 19:22:28</div>
<div class="td" style="left:1003px;top:609px;width:95px;text-align:center;color:#009688"><span class="cj">正常</span></div>
<div class="btn" style="left:1295px;top:617px;background:#FF5722"><span class="cj">禁用</span></div>
<div class="btn" style="left:1343px;top:617px;background:#009688"><span class="cj">编辑</span></div>
<div class="a" style="left:212px;top:843px;width:1696px;height:1px;background:#e6e6e6"></div>
<div class="a" style="left:227px;top:856px"><svg width="10" height="16" viewBox="0 0 10 16"><path d="M8 1 L2 8 L8 15" stroke="#d2d2d2" stroke-width="1.2" fill="none"/></svg></div>
<div class="a" style="left:251px;top:851px;width:31px;height:26px;background:#009688;border-radius:2px;color:#fff;text-align:center;line-height:26px;font-size:12px">1</div>
<div class="a" style="left:295px;top:856px"><svg width="10" height="16" viewBox="0 0 10 16"><path d="M2 1 L8 8 L2 15" stroke="#d2d2d2" stroke-width="1.2" fill="none"/></svg></div>
<div class="a ns" style="left:319.5px;top:854px;line-height:20px;font-size:12px;color:#999"><span class="cj">到第</span></div>
<div class="a" style="left:354px;top:851px;width:40px;height:26px;border:1px solid #e6e6e6;border-radius:2px;text-align:center;line-height:24px;font-size:12px;color:#333">1</div>
<div class="a ns" style="left:403.5px;top:854px;line-height:20px;font-size:12px;color:#999"><span class="cj">页</span></div>
<div class="a" style="left:426px;top:851px;width:46px;height:26px;border:1px solid #e6e6e6;border-radius:2px;text-align:center;line-height:25px;font-size:12px;color:#000"><span class="cj">确定</span></div>
<div class="a" style="left:482px;top:854px;line-height:20px;font-size:12px;color:#333;white-space:nowrap"><span class="cj">共</span> 13 <span class="cj">条</span></div>
<div class="a" style="left:536px;top:851px;width:88px;height:26px;border:1px solid #e6e6e6;border-radius:2px"></div>
<div class="a" style="left:544px;top:854px;line-height:20px;font-size:12px;color:#000;white-space:nowrap">30 <span class="cj">条</span>/<span class="cj">页</span></div>
<div class="a" style="left:609px;top:861px"><svg width="10" height="7" viewBox="0 0 10 7"><path d="M1 1 L5 5 L9 1" stroke="#000" stroke-width="2" fill="none"/></svg></div>
<div class="a" style="left:200px;top:898px;width:1719px;height:36px;background:#eeeeee"></div>
<div class="a" style="left:290px;top:904px;width:188px;height:44px;border-radius:60px 90px 40px 40px;background:#f2f2f2;filter:blur(1px)"></div>
<div class="a" style="left:215px;top:906px;line-height:20px;font-size:14px;color:#000">© Power By</div>
<div class="a" style="left:0;top:934px;width:1919px;height:1px;background:#e4e4ec"></div>
<div class="a" style="left:0;top:0;width:1919px;height:935px;mix-blend-mode:multiply;pointer-events:none">
<div class="a" style="left:1545px;top:830px;font-size:57px;line-height:70px;font-weight:900;color:#c4c4c4;white-space:nowrap;letter-spacing:4px;transform:scaleX(1.14) skewX(-13deg);transform-origin:0 100%;-webkit-text-stroke:3.2px #c4c4c4">刀客源码网</div>
<div class="a" style="left:1538px;top:892px;font-size:42px;line-height:42px;font-weight:bold;color:#d2d2d2;white-space:nowrap;letter-spacing:2.9px;transform:skewX(-13deg);transform-origin:0 100%;-webkit-text-stroke:2.4px #d2d2d2">www.dkewl.com</div>
</div>
</body></html>
